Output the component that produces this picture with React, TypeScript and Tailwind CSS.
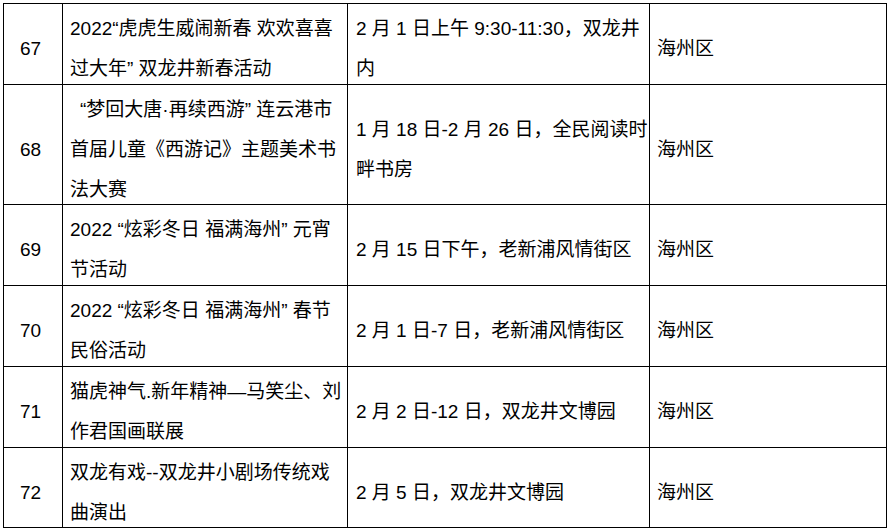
const rows: { no: string; title: string[]; time: string[]; area: string; h: string; indent?: boolean }[] = [
  {
    no: '67',
    title: ['2022“虎虎生威闹新春 欢欢喜喜', '过大年” 双龙井新春活动'],
    time: ['2 月 1 日上午 9:30-11:30，双龙井', '内'],
    area: '海州区',
    h: 'h-[81px]',
  },
  {
    no: '68',
    title: ['“梦回大唐·再续西游” 连云港市', '首届儿童《西游记》主题美术书', '法大赛'],
    time: ['1 月 18 日-2 月 26 日，全民阅读时', '畔书房'],
    area: '海州区',
    h: 'h-[120px]',
    indent: true,
  },
  {
    no: '69',
    title: ['2022 “炫彩冬日 福满海州” 元宵', '节活动'],
    time: ['2 月 15 日下午，老新浦风情街区'],
    area: '海州区',
    h: 'h-[81px]',
  },
  {
    no: '70',
    title: ['2022 “炫彩冬日 福满海州” 春节', '民俗活动'],
    time: ['2 月 1 日-7 日，老新浦风情街区'],
    area: '海州区',
    h: 'h-[81px]',
  },
  {
    no: '71',
    title: ['猫虎神气.新年精神—马笑尘、刘', '作君国画联展'],
    time: ['2 月 2 日-12 日，双龙井文博园'],
    area: '海州区',
    h: 'h-[81px]',
  },
  {
    no: '72',
    title: ['双龙有戏--双龙井小剧场传统戏', '曲演出'],
    time: ['2 月 5 日，双龙井文博园'],
    area: '海州区',
    h: 'h-[80px]',
  },
]

// lines are broken by hand so they match the original layout
function Cell({ lines, pad, h, indent }: { lines: string[]; pad: string; h: string; indent?: boolean }) {
  return (
    <div className={`${h} ${pad} flex flex-col justify-center border-r border-b border-black pt-[10px]`}>
      {lines.map((l, i) => (
        <div key={i} className={`whitespace-nowrap leading-[40px] ${indent && i === 0 ? 'pl-[10px]' : ''}`}>
          {l}
        </div>
      ))}
    </div>
  )
}

export default function App() {
  return (
    <div className="min-h-[531px] w-[890px] bg-white pl-[3px] pt-[3px]">
      <div
        className="grid w-[884px] grid-cols-[59px_285px_302px_237px] border-l border-t border-black text-[19px] text-black"
        style={{ fontFamily: '"Liberation Sans", "Noto Sans CJK SC", sans-serif' }}
      >
        {rows.map((r) => (
          <div key={r.no} className="contents">
            <Cell lines={[r.no]} pad="pl-[16px]" h={r.h} />
            <Cell lines={r.title} pad="pl-[7px]" h={r.h} indent={r.indent} />
            <Cell lines={r.time} pad="pl-[8px]" h={r.h} />
            <Cell lines={[r.area]} pad="pl-[7px]" h={r.h} />
          </div>
        ))}
      </div>
    </div>
  )
}
